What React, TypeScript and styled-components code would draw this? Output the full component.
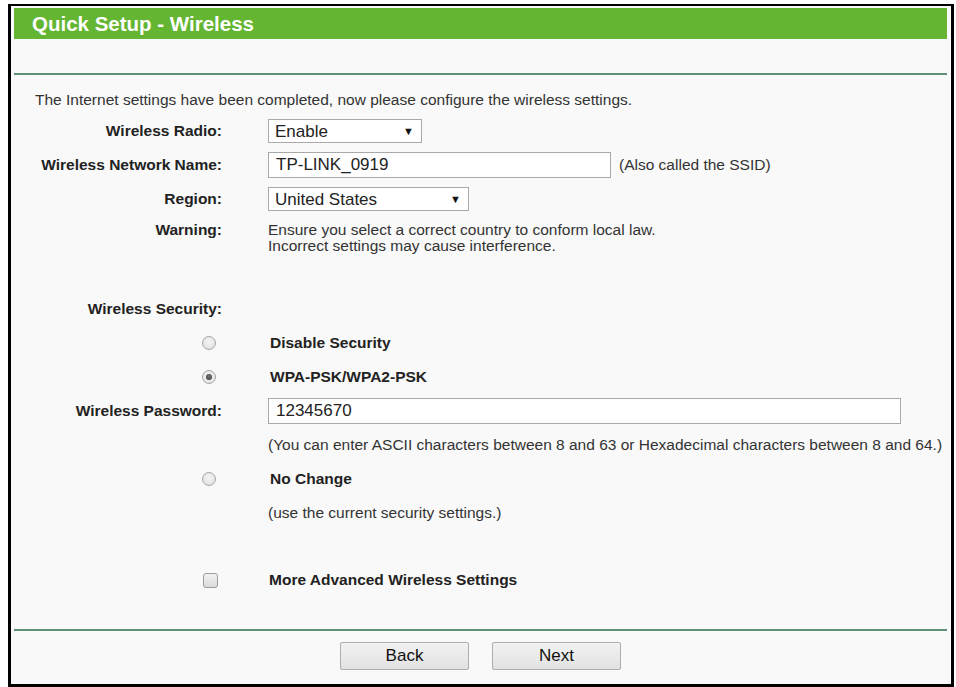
import styled, { createGlobalStyle } from 'styled-components';

const GlobalStyle = createGlobalStyle`
  html, body {
    margin: 0;
    padding: 0;
    background: #ffffff;
  }
  body {
    font-family: "Liberation Sans", Arial, sans-serif;
    font-size: 15.5px;
    color: #333;
  }
`;

function App() {
  return (
    <>
      <GlobalStyle />
      <Frame>
        <Header>Quick Setup - Wireless</Header>
        <Divider $top={34} />

        <Intro>The Internet settings have been completed, now please configure the wireless settings.</Intro>

        <Form>
          <Row>
            <Label>Wireless Radio:</Label>
            <Value>
              <SelectWrap $w={154}>
                <Select defaultValue="enable">
                  <option value="enable">Enable</option>
                  <option value="disable">Disable</option>
                </Select>
                <Arrow>▼</Arrow>
              </SelectWrap>
            </Value>
          </Row>

          <Row>
            <Label>Wireless Network Name:</Label>
            <Value>
              <TextInput $w={343} defaultValue="TP-LINK_0919" />
              <Note>(Also called the SSID)</Note>
            </Value>
          </Row>

          <Row>
            <Label>Region:</Label>
            <Value>
              <SelectWrap $w={201}>
                <Select defaultValue="us">
                  <option value="us">United States</option>
                </Select>
                <Arrow>▼</Arrow>
              </SelectWrap>
            </Value>
          </Row>

          <WarningRow>
            <Label>Warning:</Label>
            <WarningText>
              Ensure you select a correct country to conform local law.
              <br />
              Incorrect settings may cause interference.
            </WarningText>
          </WarningRow>

          <Row $top={36}>
            <Label>Wireless Security:</Label>
            <span />
          </Row>

          <Row>
            <Control>
              <Radio type="radio" name="sec" />
            </Control>
            <OptionText>Disable Security</OptionText>
          </Row>

          <Row>
            <Control>
              <Radio type="radio" name="sec" defaultChecked />
            </Control>
            <OptionText>WPA-PSK/WPA2-PSK</OptionText>
          </Row>

          <Row>
            <Label>Wireless Password:</Label>
            <Value>
              <TextInput $w={633} defaultValue="12345670" />
            </Value>
          </Row>

          <Row>
            <span />
            <Hint>(You can enter ASCII characters between 8 and 63 or Hexadecimal characters between 8 and 64.)</Hint>
          </Row>

          <Row>
            <Control>
              <Radio type="radio" name="sec" />
            </Control>
            <OptionText>No Change</OptionText>
          </Row>

          <Row>
            <span />
            <Hint>(use the current security settings.)</Hint>
          </Row>

          <Row $top={33}>
            <Control $gap={4}>
              <Checkbox type="checkbox" />
            </Control>
            <OptionText $shift={-1}>More Advanced Wireless Settings</OptionText>
          </Row>
        </Form>

        <Divider $top={32} />

        <Buttons>
          <Button type="button">Back</Button>
          <Button type="button">Next</Button>
        </Buttons>
      </Frame>
    </>
  );
}

const Frame = styled.div`
  box-sizing: border-box;
  width: 946px;
  margin: 4px 0 0 8px;
  padding: 2px 4px 14px 3px;
  border-style: solid;
  border-color: #000;
  border-width: 2px 3px 3px 3px;
  background: #f9f9f9;
`;

const Header = styled.div`
  height: 31px;
  display: flex;
  align-items: center;
  padding-left: 18px;
  background: #64b531;
  color: #fff;
  font-size: 20.5px;
  font-weight: bold;
`;

const Divider = styled.div<{ $top: number }>`
  height: 2px;
  margin-top: ${(p) => p.$top}px;
  background: #5c9173;
`;

const Intro = styled.div`
  margin-top: 16px;
  padding-left: 21px;
  line-height: 17px;
`;

const Form = styled.div`
  margin-top: 6px;
`;

const Row = styled.div<{ $top?: number }>`
  display: grid;
  grid-template-columns: 208px 1fr;
  column-gap: 46px;
  align-items: center;
  min-height: 34px;
  margin-top: ${(p) => p.$top ?? 0}px;
`;

const WarningRow = styled(Row)`
  align-items: start;
  padding-top: 6px;
  line-height: 16px;
`;

const Label = styled.div`
  text-align: right;
  font-weight: bold;
  color: #222;
  white-space: nowrap;
`;

const Value = styled.div`
  display: flex;
  align-items: center;
`;

const Control = styled.div<{ $gap?: number }>`
  display: flex;
  justify-content: flex-end;
  padding-right: ${(p) => p.$gap ?? 6}px;
`;

const OptionText = styled.div<{ $shift?: number }>`
  font-weight: bold;
  color: #222;
  padding-left: ${(p) => 2 + (p.$shift ?? 0)}px;
`;

const WarningText = styled.div`
  color: #333;
`;

const Note = styled.span`
  margin-left: 8px;
`;

const Hint = styled.div`
  white-space: nowrap;
`;

const TextInput = styled.input<{ $w: number }>`
  box-sizing: border-box;
  width: ${(p) => p.$w}px;
  height: 26px;
  padding: 0 7px;
  border: 1px solid #a9a9a9;
  background: #fff;
  font-family: "Liberation Sans", Arial, sans-serif;
  font-size: 17px;
  color: #222;
  outline: none;
`;

const SelectWrap = styled.div<{ $w: number }>`
  position: relative;
  width: ${(p) => p.$w}px;
  height: 24px;
`;

const Select = styled.select`
  box-sizing: border-box;
  width: 100%;
  height: 100%;
  padding: 0 6px;
  appearance: none;
  border: 1px solid #a9a9a9;
  border-radius: 0;
  background: #fff;
  font-family: "Liberation Sans", Arial, sans-serif;
  font-size: 17px;
  color: #222;
  outline: none;
`;

const Arrow = styled.span`
  position: absolute;
  right: 8px;
  top: 50%;
  transform: translateY(-50%);
  font-size: 11px;
  color: #111;
  pointer-events: none;
`;

const Radio = styled.input`
  appearance: none;
  box-sizing: border-box;
  width: 14px;
  height: 14px;
  margin: 0;
  border: 1px solid #a6a6a6;
  border-radius: 50%;
  background: radial-gradient(circle at 50% 40%, #f4f4f4 0%, #dedede 100%);
  display: grid;
  place-items: center;

  &:checked::after {
    content: '';
    width: 6px;
    height: 6px;
    border-radius: 50%;
    background: radial-gradient(circle at 50% 40%, #777 0%, #333 100%);
  }
`;

const Checkbox = styled.input`
  appearance: none;
  box-sizing: border-box;
  width: 15px;
  height: 15px;
  margin: 0;
  border: 1px solid #9c9c9c;
  border-radius: 3px;
  background: linear-gradient(#f2f2f2, #dadada);
`;

const Buttons = styled.div`
  display: flex;
  justify-content: center;
  gap: 23px;
  margin-top: 11px;
`;

const Button = styled.button`
  width: 129px;
  height: 28px;
  border: 1px solid #adadad;
  border-radius: 2px;
  background: linear-gradient(#f2f2f2, #e2e2e2);
  font-family: "Liberation Sans", Arial, sans-serif;
  font-size: 17px;
  color: #111;
  padding: 0;
`;

export default App;
